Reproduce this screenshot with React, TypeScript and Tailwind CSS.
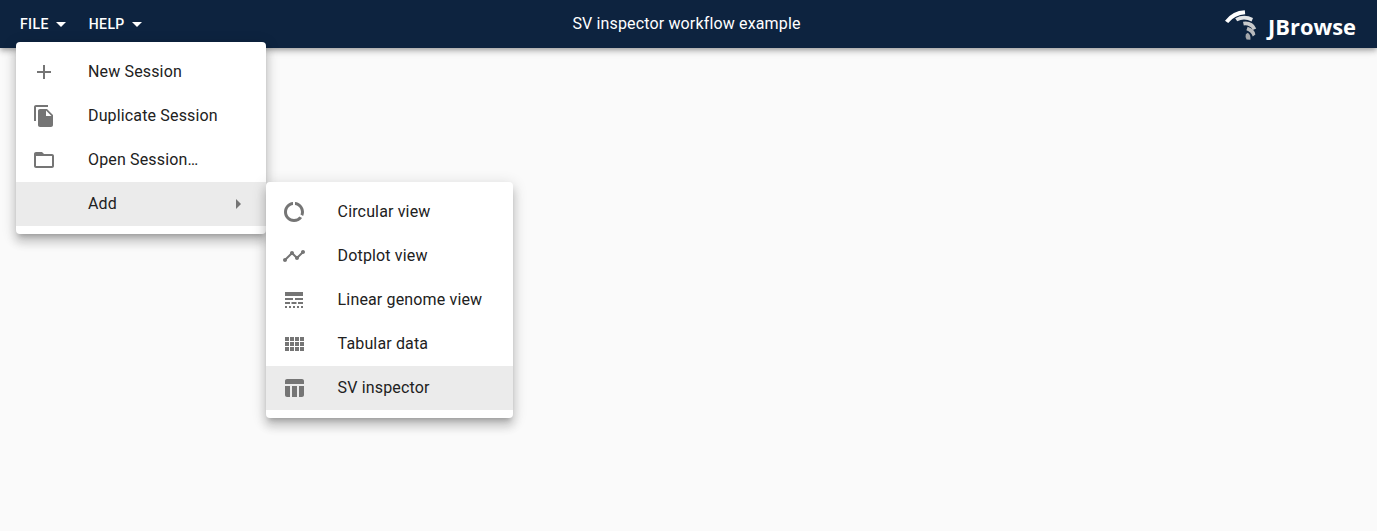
import type { ReactNode } from 'react'
import {
  MdAdd,
  MdArrowDropDown,
  MdArrowRight,
  MdDataUsage,
  MdFileCopy,
  MdFolderOpen,
  MdLineStyle,
  MdTimeline,
} from 'react-icons/md'

function GridIcon() {
  return (
    <svg viewBox="0 0 24 24" width="24" height="24" fill="currentColor">
      <path d="M3 9h4V5H3v4zm0 5h4v-4H3v4zm5 0h4v-4H8v4zm5 0h4v-4h-4v4zM8 9h4V5H8v4zm5-4v4h4V5h-4zm5 9h4v-4h-4v4zM3 19h4v-4H3v4zm5 0h4v-4H8v4zm5 0h4v-4h-4v4zm5 0h4v-4h-4v4zm0-14v4h4V5h-4z" />
    </svg>
  )
}

function TableChartIcon() {
  return (
    <svg viewBox="0 0 24 24" width="24" height="24" fill="currentColor">
      <path d="M10 10.02h5V21h-5V10.02zM17 21h3c1.1 0 2-.9 2-2v-9h-5v11zm3-18H5c-1.1 0-2 .9-2 2v3h19V5c0-1.1-.9-2-2-2zM3 19c0 1.1.9 2 2 2h3V10H3v9z" />
    </svg>
  )
}

function Logo() {
  return (
    <div className="flex h-12 items-center pt-0.5 text-white">
      <svg width="45" height="40" viewBox="0 0 45 40">
        <path d="M5 15.7Q12.5 5.8 24.8 5.3L25.2 9.3Q15 9.7 8.2 18Z" fill="#ffffff" />
        <path d="M15.2 13.2Q24 8.4 33 13L31.6 16.4Q24 12.6 17.2 16.2Z" fill="#e2e4e6" />
        <path d="M23 16.8Q32.6 15.4 36.2 23.4L32.8 25Q30 19.8 23.8 20.4Z" fill="#c8cacc" />
        <path d="M27.6 21.8Q34.2 23.6 35.4 29.4L32.8 31.6Q31 26.6 26.4 25.2Z" fill="#b8babd" />
        <path d="M25.8 29.2L27.8 27.8Q31 29.8 30.4 34.8L26.6 34.4Q25 31.6 25.8 29.2Z" fill="#a3a6aa" />
      </svg>
      <svg width="98" height="40" viewBox="0 0 98 40" fill="currentColor">
        <text x="3" y="29.6" textLength="88" lengthAdjust="spacingAndGlyphs" className="font-['Open_Sans'] text-[22px] font-bold">
          JBrowse
        </text>
      </svg>
    </div>
  )
}

function MenuButton({ label }: { label: string }) {
  return (
    <button className="flex h-9 items-center text-sm font-medium tracking-[0.4px]">
      {label}
      <MdArrowDropDown size={24} />
    </button>
  )
}

function MenuItem({ icon, label, selected, nested }: {
  icon?: ReactNode
  label: string
  selected?: boolean
  nested?: boolean
}) {
  return (
    <li className={`flex h-11 items-center px-4 ${selected ? 'bg-[#ebebeb]' : 'bg-white'}`}>
      <span className="flex w-14 shrink-0 text-[#757575]">{icon}</span>
      <span className="grow text-base tracking-[0.15px] whitespace-nowrap">{label}</span>
      {nested && <MdArrowRight size={24} className="text-[#757575]" />}
    </li>
  )
}

const menuShadow =
  'shadow-[0_5px_5px_-3px_rgba(0,0,0,0.2),0_8px_10px_1px_rgba(0,0,0,0.14),0_3px_14px_2px_rgba(0,0,0,0.12)]'

export default function App() {
  return (
    <div className="relative h-[531px] w-full overflow-hidden bg-[#fafafa] font-['Roboto',sans-serif] text-[#212121]">
      <header className="grid h-12 grid-cols-[1fr_auto_1fr] items-center bg-[#0d233f] text-white shadow-[0_2px_4px_-1px_rgba(0,0,0,0.2),0_4px_5px_0_rgba(0,0,0,0.14),0_1px_10px_0_rgba(0,0,0,0.12)]">
        <nav className="flex gap-4 pl-5">
          <MenuButton label="FILE" />
          <MenuButton label="HELP" />
        </nav>
        <h1 className="pr-1 text-base tracking-[0.15px]">SV inspector workflow example</h1>
        <div className="flex justify-end pr-[14px]">
          <Logo />
        </div>
      </header>

      <ul className={`absolute top-[42px] left-4 w-[250px] rounded bg-white py-2 ${menuShadow}`}>
        <MenuItem icon={<MdAdd size={24} />} label="New Session" />
        <MenuItem icon={<MdFileCopy size={24} />} label="Duplicate Session" />
        <MenuItem icon={<MdFolderOpen size={24} />} label="Open Session…" />
        <MenuItem label="Add" selected nested />
      </ul>

      <ul className={`absolute top-[182px] left-[265.6px] w-[247px] rounded bg-white py-2 ${menuShadow}`}>
        <MenuItem icon={<MdDataUsage size={24} />} label="Circular view" />
        <MenuItem icon={<MdTimeline size={24} />} label="Dotplot view" />
        <MenuItem icon={<MdLineStyle size={24} />} label="Linear genome view" />
        <MenuItem icon={<GridIcon />} label="Tabular data" />
        <MenuItem icon={<TableChartIcon />} label="SV inspector" selected />
      </ul>
    </div>
  )
}
